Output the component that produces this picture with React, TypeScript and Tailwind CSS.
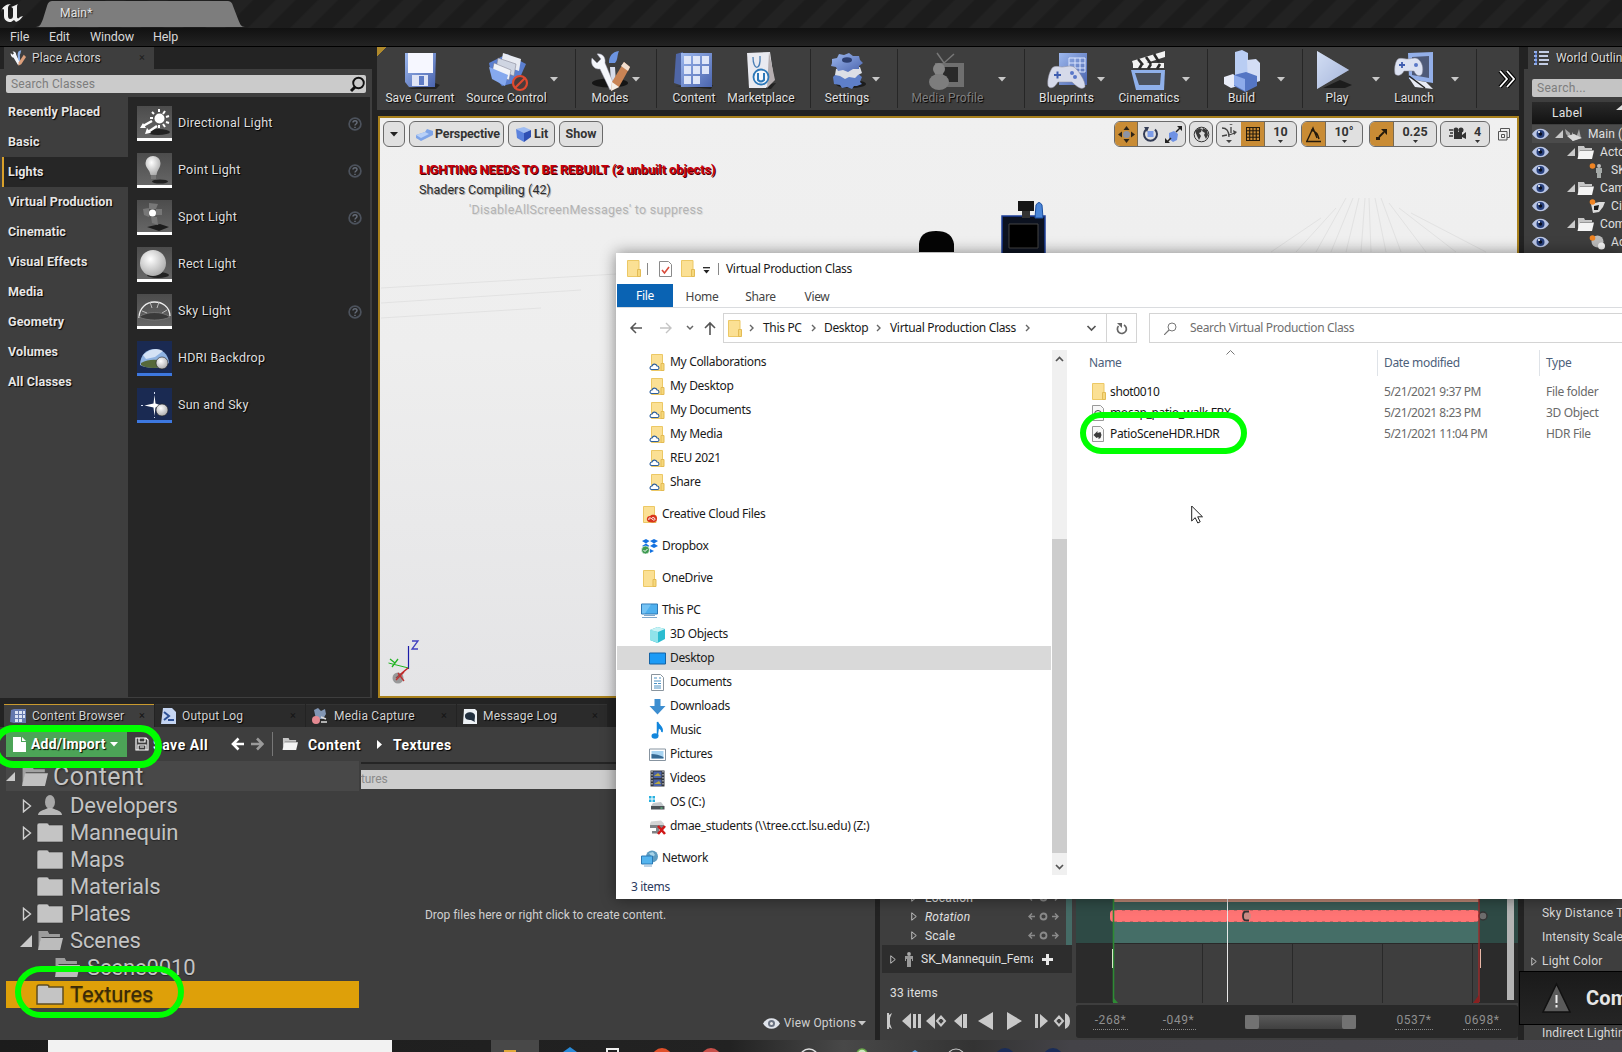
import React from "react";

type Kids = { children?: React.ReactNode };

const Caret = ({ c = "#c8c8c8", cls = "" }: { c?: string; cls?: string }) => (
  <svg width="8" height="5" viewBox="0 0 8 5" className={"shrink-0 " + cls}>
    <path d="M0 0h8L4 4.6z" fill={c} />
  </svg>
);

/* ---------- toolbar drawings ---------- */
const Tool = ({ children }: Kids) => (
  <svg width="44" height="40" viewBox="0 0 44 40" className="shrink-0 overflow-visible">
    <defs>
      <linearGradient id="blu" x1="0" y1="0" x2="1" y2="1">
        <stop offset="0" stopColor="#9db8ee" />
        <stop offset="1" stopColor="#4a64ae" />
      </linearGradient>
      <linearGradient id="wht" x1="0" y1="0" x2="1" y2="1">
        <stop offset="0" stopColor="#ffffff" />
        <stop offset="1" stopColor="#aab4d0" />
      </linearGradient>
    </defs>
    {children}
  </svg>
);
const SaveIcon = () => (
  <Tool>
    <path d="M10 38h28l4-4-5-2z" fill="#222" />
    <path d="M7 2h31l-1 34H11l-4-5z" fill="url(#blu)" />
    <path d="M10 2h25v20H10z" fill="#f6f7ff" />
    <path d="M14 24h16v11H14z" fill="#dfe4f5" />
    <path d="M21 25h5v9h-5z" fill="#5f7cc5" />
  </Tool>
);
const SourceIcon = () => (
  <Tool>
    <path d="M4 12l18-9 19 10-8 18-16 4L6 22z" fill="#5b7fd0" />
    <path d="M18 2l18 6-2 12-18-6z" fill="#e8ebf2" />
    <path d="M13 7l18 6-2 12-18-7z" fill="#cfd5e2" stroke="#778" strokeWidth=".5" />
    <path d="M9 12l17 7-2 10-17-7z" fill="#f1f3f8" stroke="#778" strokeWidth=".5" />
    <path d="M4 16l19 8-3 11L7 28z" fill="#86a9ee" />
    <circle cx="35" cy="32" r="7" fill="#4a3c3c" stroke="#e0492f" strokeWidth="2.2" />
    <path d="M30 37L40 27" stroke="#e0492f" strokeWidth="2.2" />
  </Tool>
);
const ModesIcon = () => (
  <Tool>
    <ellipse cx="22" cy="32" rx="18" ry="4.500" fill="#151515" />
    <path d="M22 16h5l1 16h-5z" fill="#d7dcea" />
    <path d="M21 12c0-7 3-11 10-12-2 4-1 9-4 12z" fill="#6c94e0" />
    <path d="M4 7l5 5 4-4-4-5c5-1 9 3 8 9l10 24-5 3L12 18C6 19 2 13 4 7z" fill="#f4f6fb" stroke="#99a" strokeWidth=".5" />
    <path d="M36 11l6 5-11 20-8 4 1-9z" fill="#c98455" />
    <path d="M36 11l6 5-2 4-7-5z" fill="#f2dfd0" />
    <path d="M24 31l7 5-8 4z" fill="#f5efe8" />
  </Tool>
);
const ContentIcon = () => (
  <Tool>
    <path d="M3 35l36 3 2-4z" fill="#222" />
    <path d="M4 3l7-2v34L2 32z" fill="#4f66a6" />
    <path d="M9 2h31v34H9z" fill="url(#blu)" />
    {[5, 15, 25].map((y) => [12, 21, 30].map((x) => (y === 25 && x === 30 ? null : <rect key={x + "" + y} x={x} y={y} width="7" height="8" fill="#dfe6f8" />)))}
  </Tool>
);
const MarketIcon = () => (
  <Tool>
    <path d="M10 36l22 2 5-6z" fill="#222" />
    <path d="M8 2l23-1 4 28-8 8H10z" fill="#e9eaf0" />
    <path d="M30 1l6 28-8 8z" fill="#b5aeb0" />
    <path d="M14 6c0 14 8 14 7-1" fill="none" stroke="#4b7fb5" strokeWidth="1.3" />
    <circle cx="22" cy="26" r="7.5" fill="#f4f7fc" stroke="#2d78b8" strokeWidth="1.8" />
    <path d="M19 22v7q3 3 6 0v-7" fill="none" stroke="#2d78b8" strokeWidth="2" />
  </Tool>
);
const SettingsIcon = () => (
  <Tool>
    <ellipse cx="26" cy="33" rx="15" ry="4" fill="#1c1c1c" />
    <path d="M8 26l4-4h20l5 4-2 5 2 2-5 2-3 0-2 3-5-2-5 1-2-3-6-1z" fill="#5e7fc8" />
    <path d="M11 18l24-2 2 6-4 2-3 3-6-1-4 2-5-3-5-1z" fill="#dcdfe6" />
    <path d="M7 8l5-1 2-4 5 1 5-2 4 3 6 0 1 4 3 3-4 3v3l-6 0-5 3-5-2-5 1-2-4-5-1 1-3z" fill="url(#blu)" />
    <ellipse cx="22" cy="9" rx="5" ry="2.8" fill="#2d3f70" />
  </Tool>
);
const MediaIcon = () => (
  <Tool>
    <path d="M11 2l7 10 10-9" fill="none" stroke="#777" strokeWidth="1.500" />
    <path d="M9 12h29v24H9z" fill="#6f6f6f" />
    <path d="M17 16h15v15H17z" fill="#292929" />
    <circle cx="13" cy="18" r="6" fill="#858585" />
    <ellipse cx="13" cy="31" rx="10" ry="8" fill="#7d7d7d" />
  </Tool>
);
const BlueprintIcon = () => (
  <Tool>
    <path d="M14 2h28v32H14z" fill="url(#blu)" />
    <path d="M24 7h16v14H24zM30 7v14M35 7v14M24 12h16M24 17h16" fill="none" stroke="#dce6ff" strokeWidth="1" />
    <path d="M7 17c4-3 7-1 10-1s8-2 12 0c4 3 12 14 11 20-3 3-7 1-13-5H13c-3 5-7 8-10 4-1-6 1-13 4-18z" fill="#d6daea" stroke="#889" strokeWidth=".5" />
    <path d="M9 24h7M12.500 20.500v7" stroke="#3f5db0" strokeWidth="2" />
    <circle cx="27" cy="22" r="2" fill="#5a78c8" />
    <circle cx="30" cy="26" r="2" fill="#5a78c8" />
  </Tool>
);
const CineIcon = () => (
  <Tool>
    <path d="M5 10L38 0v6L7 16zM6 12h31v5H6z" fill="#f2f2f2" />
    <path d="M11 8l5 6M19 6l5 7M27 3l5 8M12 18l3-5M21 18l3-5M30 18l3-5" stroke="#2a2a2a" strokeWidth="2.600" />
    <path d="M4 19h34l-1 20H9z" fill="#8fb0ea" />
    <path d="M8 22h26l-1 12H12z" fill="#4b515c" />
  </Tool>
);
const BuildIcon = () => (
  <Tool>
    <path d="M15 1l7-2 6 3v24l-8 6-5-4z" fill="#b9cdf3" />
    <path d="M27 9l9-1 4 4v18l-12 4z" fill="#d3ddf5" />
    <path d="M4 26l9-3 5 4v8l-7 2-7-4z" fill="#e8ecf8" />
    <path d="M14 24l12-3 11 4v10l-12 6-11-6z" fill="#5576c4" />
    <path d="M14 24l11 4v12l-11-6z" fill="#8eabea" />
  </Tool>
);
const PlayIcon = () => (
  <Tool>
    <path d="M8 37l22 0 7-3-12-5z" fill="#1c1c1c" />
    <path d="M2 0l32 19L2 38z" fill="url(#wht)" />
    <path d="M2 0l32 19L2 38z" fill="#9db5e6" opacity=".45" />
  </Tool>
);
const LaunchIcon = () => (
  <Tool>
    <path d="M16 2l25-1v31l-24-4z" fill="#93afe8" />
    <path d="M20 6l17-1v22l-17-3z" fill="#4e5a78" />
    <path d="M5 9c3-3 6-1 10-1s8-2 11 0c4 3 6 9 4 15-2 3-6 2-8-3H12c-2 4-6 6-9 3-1-5 0-11 2-14z" fill="#dce2f2" stroke="#889" strokeWidth=".5" />
    <path d="M7 14h6M10 11v6" stroke="#3f5db0" strokeWidth="1.800" />
    <circle cx="24" cy="14" r="2" fill="#5a78c8" />
    <path d="M17 27l6 9 18 2-7-7-6-1z" fill="#e8ebf4" />
    <path d="M17 25l16 12" stroke="#222" strokeWidth="1.500" />
  </Tool>
);

const TOOLS: { l: string; i: React.FC; m: string; w: string; a?: string; s?: string; dim?: boolean }[] = [
  { l: "Save Current", i: SaveIcon, m: "ml-0", w: "w-[86px]" },
  { l: "Source Control", i: SourceIcon, m: "ml-0", w: "w-[87px]", a: "ml-0", s: "ml-[17px]" },
  { l: "Modes", i: ModesIcon, m: "ml-[12px]", w: "w-[44px]", a: "ml-0", s: "ml-[16px]" },
  { l: "Content", i: ContentIcon, m: "ml-[12px]", w: "w-[50px]" },
  { l: "Marketplace", i: MarketIcon, m: "ml-[8px]", w: "w-[68px]", s: "ml-[15px]" },
  { l: "Settings", i: SettingsIcon, m: "ml-[12px]", w: "w-[48px]", a: "ml-px", s: "ml-[17px]" },
  { l: "Media Profile", i: MediaIcon, m: "ml-[10px]", w: "w-[79px]", a: "ml-[11px]", s: "ml-[18px]", dim: true },
  { l: "Blueprints", i: BlueprintIcon, m: "ml-[12px]", w: "w-[59px]", a: "ml-px" },
  { l: "Cinematics", i: CineIcon, m: "ml-[13px]", w: "w-[62px]", a: "ml-[2px]", s: "ml-[17px]" },
  { l: "Build", i: BuildIcon, m: "ml-[12px]", w: "w-[43px]", a: "ml-[14px]", s: "ml-[17px]" },
  { l: "Play", i: PlayIcon, m: "ml-[12px]", w: "w-[44px]", a: "ml-[13px]" },
  { l: "Launch", i: LaunchIcon, m: "ml-[12px]", w: "w-[44px]", a: "ml-[15px]", s: "ml-[17px]" },
];

const Toolbar = () => (
  <div className="flex h-[63px] w-[1142px] shrink-0 items-stretch overflow-hidden bg-[#3e3e3e] bg-[linear-gradient(135deg,#b08a2c_7px,transparent_7px)]">
    {TOOLS.map((t) => (
      <React.Fragment key={t.l}>
        <div className={"flex shrink-0 flex-col items-center pt-[4px] " + t.m + " " + t.w}>
          <t.i />
          <span className={"whitespace-nowrap text-[12px] leading-[14px] tracking-[.1px] [text-shadow:1px_1px_1px_#000] " + (t.dim ? "text-[#808080]" : "text-[#e2e2e2]")}>{t.l}</span>
        </div>
        {t.a && <Caret cls={"mt-[30px] " + t.a} />}
        {t.s && <div className={"my-[2px] w-px shrink-0 bg-[#262626] " + t.s} />}
      </React.Fragment>
    ))}
    <svg width="18" height="18" viewBox="0 0 18 18" className="ml-[21px] mt-[23px] shrink-0">
      <path d="M2 1l7 8-7 8M9 1l7 8-7 8" fill="none" stroke="#000" strokeWidth="4" />
      <path d="M2 1l7 8-7 8M9 1l7 8-7 8" fill="none" stroke="#fff" strokeWidth="1.800" />
    </svg>
  </div>
);

/* ---------- place actors ---------- */
const Thumb = ({ children, blue }: Kids & { blue?: boolean }) => (
  <svg width="35" height="35" viewBox="0 0 35 35" className="shrink-0">
    <defs>
      <radialGradient id="sph" cx=".4" cy=".35" r=".7">
        <stop offset="0" stopColor="#fff" />
        <stop offset="1" stopColor="#a9a9a9" />
      </radialGradient>
      <linearGradient id="tb" x1="0" y1="0" x2="0" y2="1">
        <stop offset="0" stopColor="#4c4c4c" />
        <stop offset="1" stopColor="#666" />
      </linearGradient>
    </defs>
    <rect width="35" height="32" fill={blue ? "#1a2a52" : "url(#tb)"} />
    {children}
    <rect y="32" width="35" height="3" fill={blue ? "#3d78e0" : "#fff"} />
  </svg>
);
const THUMBS = [
  <Thumb key="a">
    <ellipse cx="21" cy="26" rx="12" ry="3" fill="#222" />
    <circle cx="22.500" cy="12.500" r="5" fill="#fff" />
    <path d="M22 3v3M28 5l-2 3M32 10l-3 1M32 17l-3-1M28 21l-2-3M15 6l2 2M13 12h3M22 22v-3" stroke="#fff" strokeWidth="2" />
    <path d="M15 15L6 20M20 20l-9 6" stroke="#fff" strokeWidth="2.400" />
    <path d="M3 22l3-5 3 5zM8 28l2-6 4 5z" fill="#fff" />
  </Thumb>,
  <Thumb key="b">
    <ellipse cx="23" cy="28.500" rx="8" ry="2" fill="#222" />
    <path d="M8.500 10a7.500 7 0 0 1 15 0c0 5-3 6-4 12h-6c-1-6-5-7-5-12z" fill="url(#sph)" />
    <path d="M14 22h5v4h-5z" fill="#777" />
  </Thumb>,
  <Thumb key="c">
    <path d="M10 27l13-3 9 3-10 4z" fill="#1d1d1d" />
    <path d="M12 3l9 1-2 5h-7zM6 9l6-1v9l-5-2zM19 9h6v6h-6zM14 17l6 0 1 8-6-2z" fill="#777" />
    <circle cx="15.500" cy="13" r="3.500" fill="#fff" />
  </Thumb>,
  <Thumb key="d">
    <ellipse cx="21" cy="28" rx="11" ry="3" fill="#222" />
    <circle cx="16" cy="16" r="13" fill="url(#sph)" />
  </Thumb>,
  <Thumb key="e">
    <path d="M2 24C2 3 32 3 33 22" fill="none" stroke="#eee" strokeWidth="1.300" />
    <path d="M2 23c8-6 23-6 31 0-8 4-23 4-31 0z" fill="#3a3a3a" stroke="#888" strokeWidth=".6" />
    <path d="M13 8l2 6M22 8l-2 6M5 17l5 2M30 16l-5 3" stroke="#bbb" />
  </Thumb>,
  <Thumb key="f" blue>
    <path d="M3 24C3 3 31 3 32 22c-8 6-22 6-29 2z" fill="#8fb3e2" />
    <path d="M6 14c6-6 14-8 20-4l-8 6-9 2z" fill="#e5eefa" opacity=".8" />
    <path d="M4 22c7-4 15-4 22-2l-2 6c-7 2-16 1-20-2z" fill="#56693a" />
    <circle cx="25" cy="22" r="6" fill="url(#sph)" stroke="#222" strokeWidth=".6" />
  </Thumb>,
  <Thumb key="g" blue>
    <path d="M17.500 7l1 8.500 6 2-6 2-1 8.500-1-8.500-9-2 9-2z" fill="#fff" />
    <path d="M17.500 4v2M4 17.500h2M17.500 29v1" stroke="#cfd9ee" />
    <circle cx="25" cy="22" r="6" fill="url(#sph)" stroke="#222" strokeWidth=".6" />
  </Thumb>,
];
const ACTORS = ["Directional Light", "Point Light", "Spot Light", "Rect Light", "Sky Light", "HDRI Backdrop", "Sun and Sky"];
const CATS = ["Recently Placed", "Basic", "Lights", "Virtual Production", "Cinematic", "Visual Effects", "Media", "Geometry", "Volumes", "All Classes"];

const PlaceActors = () => (
  <div className="flex w-[372px] shrink-0 flex-col">
    <div className="flex h-[22px] bg-[#232323] pl-[4px]">
      <div className="flex w-[150px] items-center bg-[#3e3e3e] pl-[6px] text-[12px] tracking-[.1px] text-[#d5d5d5] [text-shadow:1px_1px_1px_#000]">
        <svg width="16" height="16" viewBox="0 0 44 42">
          <path d="M21 12c0-7 3-11 10-12-2 4-1 9-4 12l1 20h-5z" fill="#8fb2ea" />
          <path d="M2 7l5 5 4-4-4-5c7-1 10 3 10 9l11 24-6 4L10 20C4 19 1 13 2 7z" fill="#f4f6fb" />
          <path d="M38 12l6 6-13 20-8 4 1-9z" fill="#dda07c" />
        </svg>
        <span className="ml-[6px]">Place Actors</span>
        <span className="ml-auto mr-[9px] text-[11px] text-[#1e1e1e] [text-shadow:none]">×</span>
      </div>
    </div>
    <div className="flex h-[629px] flex-col bg-[#3e3e3e]">
      <div className="mx-[6px] mt-[6px] flex h-[18px] items-center justify-between rounded-[2px] bg-[#cbcbcb] pl-[5px] text-[12px] tracking-[.15px] text-[#7d7d7d]">
        Search Classes
        <svg width="17" height="17" viewBox="0 0 17 17">
          <circle cx="9.500" cy="7" r="5.300" fill="none" stroke="#111" strokeWidth="1.900" />
          <path d="M6 11l-4 4" stroke="#111" strokeWidth="3" />
        </svg>
      </div>
      <div className="mt-[4px] flex h-[600px]">
        <div className="w-[128px] pb-1">
          {CATS.map((c) => (
            <div key={c} className={"flex h-[30px] items-center whitespace-nowrap text-[12.500px] font-bold tracking-[.13px] text-[#e6e6e6] [text-shadow:1px_1px_1px_#000] " + (c === "Lights" ? "ml-[2px] border-l-2 border-[#d9a02a] bg-[#262626] pl-[4px]" : "pl-[8px]")}>
              {c}
            </div>
          ))}
        </div>
        <div className="w-[242px] bg-[#262626] pl-[9px] pt-[9px]">
          {ACTORS.map((a, i) => (
            <div key={a} className="mb-[12px] flex h-[35px] items-center text-[12.500px] tracking-[.25px] text-[#dedede] [text-shadow:1px_1px_1px_#000]">
              {THUMBS[i]}
              <span className="ml-[6px]">{a}</span>
              {[0, 1, 2, 4].includes(i) && (
                <svg width="14" height="14" viewBox="0 0 14 14" className="ml-auto mr-[8px]">
                  <circle cx="7" cy="7" r="5.900" fill="none" stroke="#4c525c" strokeWidth="1.700" />
                  <path d="M5 5.600C5 3 9.200 3 9 5.600 9 7 7 7 7 8.600M7 9.700v1.400" fill="none" stroke="#656c78" strokeWidth="1.500" />
                </svg>
              )}
            </div>
          ))}
        </div>
      </div>
    </div>
  </div>
);

/* ---------- viewport ---------- */
const VBtn = ({ children, cls = "" }: Kids & { cls?: string }) => (
  <div className={"flex h-[26px] shrink-0 items-center overflow-hidden rounded-[6px] border border-[#6a6a6a] bg-[#e0e0e0] text-[12.500px] font-bold text-[#333] " + cls}>{children}</div>
);
const Orange = ({ children, cls = "w-[24px]" }: Kids & { cls?: string }) => <div className={"flex h-full shrink-0 items-center justify-center border-r border-[#7a6a50] bg-[#c98c35] " + cls}>{children}</div>;
const Num = ({ v }: { v: string }) => (
  <div className="flex flex-1 flex-col items-center leading-[12px]">
    {v}
    <svg width="5" height="3" viewBox="0 0 5 3" className="mt-[2px]">
      <path d="M0 0h5L2.500 3z" fill="#333" />
    </svg>
  </div>
);

const Viewport = () => (
  <div className="relative ml-px mt-[6px] h-[582px] w-[1141px] overflow-hidden border-2 border-[#a9811c] bg-[linear-gradient(180deg,#f0f0f0,#eeeeee_40%,#e4e4e6)]">
    <svg className="absolute left-0 top-0" width="1137" height="578" viewBox="-1 0 1137 578">
      <g stroke="#e2e2e2" strokeWidth="1">
        <path d="M940 100L890 134M955 90L915 134M965 80L935 134M972 80L950 134M978 80L965 134M984 80L980 134M988 80L990 134M994 80L1005 134M1000 80L1020 134M1008 85L1045 134M1018 90L1075 134M1030 95L1105 134M0 170L236 156M0 200L160 190M0 185L200 172" />
      </g>
      <path d="M538 134v-8q1-13 17-13t18 13v8z" fill="#050505" />
      <path d="M621 98h43v40h-43z" fill="#0c1220" stroke="#1d3f9a" strokeWidth="1.500" />
      <path d="M628 106h29v24h-29z" fill="#000" stroke="#444" />
      <path d="M637 83h16v10h-16z" fill="#161616" />
      <path d="M641 93h8v7h-8z" fill="#333" />
      <path d="M655 87q3-5 6 0l1 13h-8z" fill="#4a86d8" stroke="#1c4fa0" />
      <path d="M27.500 528v23" stroke="#1b1ba8" strokeWidth="1.200" />
      <path d="M27.500 550l-20-5" stroke="#22b422" />
      <path d="M27 550l-12 10" stroke="#c02020" strokeWidth="1.500" />
      <circle cx="17" cy="560" r="5.500" fill="#666" opacity=".6" />
      <path d="M17 555l6 8M23 554l-8 8" stroke="#c03030" strokeWidth="1.300" />
      <path d="M9 541l5 4M17 541l-6 8" stroke="#22b422" strokeWidth="1.300" />
      <path d="M31 523h6l-6 8h6" fill="none" stroke="#4040c0" strokeWidth="1.300" />
    </svg>
    <div className="relative flex pl-[3px] pt-[3px]">
      <VBtn cls="w-[22px] justify-center">
        <Caret c="#222" />
      </VBtn>
      <VBtn cls="ml-[4px] w-[95px] pl-[6px]">
        <svg width="17" height="13" viewBox="0 0 17 13">
          <path d="M0 7l9-3 2-3 6 2v4l-6 3-6 3-5-3z" fill="#7fa5e8" />
          <path d="M0 7l9-3 4 2-8 4z" fill="#b8d0f7" />
        </svg>
        <span className="ml-[2px] tracking-[-.15px]">Perspective</span>
      </VBtn>
      <VBtn cls="ml-[4px] w-[47px] pl-[6px]">
        <svg width="17" height="17" viewBox="0 0 17 17">
          <path d="M1 3l8-2 7 3-7 3z" fill="#9ebcf2" />
          <path d="M1 3l8 4v9l-7-4z" fill="#5b82dd" />
          <path d="M16 4l-7 3v9l7-5z" fill="#2f50b4" />
        </svg>
        <span className="ml-[2px]">Lit</span>
      </VBtn>
      <VBtn cls="ml-[4px] w-[44px] justify-center">Show</VBtn>
      <VBtn cls="ml-[511px] w-[72px]">
        <Orange cls="w-[23px]">
          <svg width="17" height="17" viewBox="0 0 17 17">
            <circle cx="8.500" cy="8.500" r="3.500" fill="#8d93a4" />
            <path d="M8.500 0l3 4h-6zM8.500 17l3-4h-6zM0 8.500l4-3v6zM17 8.500l-4-3v6z" fill="#2d2418" />
          </svg>
        </Orange>
        <svg width="17" height="17" viewBox="0 0 17 17" className="ml-[4px]">
          <path d="M5.500 5h6v6h-6z" fill="#7c9ce8" />
          <path d="M4 3.500a6.500 6.500 0 1 0 9 0" fill="none" stroke="#333c55" strokeWidth="2" />
          <path d="M2 1l5 0-2 5z" fill="#333c55" />
        </svg>
        <svg width="17" height="17" viewBox="0 0 17 17" className="ml-[6px]">
          <path d="M4 7l5-2 4 3-1 6-4 2-4-3z" fill="#6f92e4" />
          <path d="M11 6l4-4M6 12l-4 4" stroke="#222" strokeWidth="1.500" />
          <path d="M17 0v5l-5-5zM0 17v-5l5 5z" fill="#222" />
        </svg>
      </VBtn>
      <VBtn cls="ml-[3px] w-[24px] justify-center">
        <svg width="17" height="17" viewBox="0 0 17 17">
          <circle cx="8.500" cy="8.500" r="7.300" fill="#ddd" stroke="#333" strokeWidth="1" />
          <path d="M2 5l4-3 3 1-1 3-2 1 2 3-2 4-2-4zM10 2l4 2 1 5-2 4-2-4 1-2-3-2z" fill="#3a3a3a" />
        </svg>
      </VBtn>
      <VBtn cls="ml-[3px] w-[81px]">
        <svg width="22" height="20" viewBox="0 0 22 20" className="mx-px">
          <path d="M4 4c4 0 7 3 7 9M11 11l6-2M4 12l5-1M13 3v6" fill="none" stroke="#444" strokeWidth="1.300" />
          <path d="M11 1h4l-2-1zM15 6l4 2-3 3zM8 16h6l-3 3z" fill="#444" />
        </svg>
        <Orange>
          <svg width="14" height="14" viewBox="0 0 15 15">
            <path d="M.5.500h14v14H.5zM4 0v15M7.500 0v15M11 0v15M0 4h15M0 7.500h15M0 11h15" fill="none" stroke="#241a0c" strokeWidth="1.200" />
          </svg>
        </Orange>
        <Num v="10" />
      </VBtn>
      <VBtn cls="ml-[4px] w-[62px]">
        <Orange>
          <svg width="17" height="17" viewBox="0 0 17 17">
            <path d="M1 15.500h15M2 15L8 2l4 10M6 4c4 1 7 4 8 9" fill="none" stroke="#241a0c" strokeWidth="1.400" />
          </svg>
        </Orange>
        <Num v="10°" />
      </VBtn>
      <VBtn cls="ml-[6px] w-[68px]">
        <Orange>
          <svg width="13" height="13" viewBox="0 0 13 13">
            <path d="M4 9l5-5" stroke="#241a0c" strokeWidth="1.800" />
            <path d="M12 1v6L6 1zM1 9h4v3H1z" fill="#241a0c" />
          </svg>
        </Orange>
        <Num v="0.25" />
      </VBtn>
      <VBtn cls="ml-[3px] w-[50px] pl-[8px]">
        <svg width="17" height="14" viewBox="0 0 17 14">
          <path d="M0 3h4M1 6h3M0 9h4" stroke="#333" strokeWidth="1.300" />
          <path d="M5 5h8v7H5zM13 8l4-3v7l-4-2z" fill="#333" />
          <circle cx="7" cy="3" r="2.500" fill="#333" />
          <circle cx="12" cy="3" r="2.500" fill="#333" />
        </svg>
        <Num v="4" />
      </VBtn>
      <svg width="12" height="13" viewBox="0 0 12 13" className="ml-[8px] mt-[7px]">
        <path d="M2.500 3V.5h9v9H9M.5 3.500h8.500v8.500H.5zM3.500 6.500h3v3h-3z" fill="none" stroke="#555" />
      </svg>
    </div>
    <div className="relative pl-[39px] pt-[13px] leading-[20px]">
      <div className="text-[13px] font-bold tracking-[-.14px] text-[#c8000c] [text-shadow:1px_1px_0_#4a0000]">LIGHTING NEEDS TO BE REBUILT (2 unbuilt objects)</div>
      <div className="text-[12.500px] tracking-[.06px] text-[#2c2c2c] [text-shadow:1px_1px_0_#aaa]">Shaders Compiling (42)</div>
      <div className="pl-[50px] text-[12.500px] tracking-[.27px] text-[#b3b3b3] [text-shadow:1px_1px_0_#ddd]">'DisableAllScreenMessages' to suppress</div>
    </div>
  </div>
);

/* ---------- outliner ---------- */
const Eye = () => (
  <svg width="17" height="12" viewBox="0 0 17 12" className="shrink-0">
    <path d="M0 6C4-1 13-1 17 6c-4 7-13 7-17 0z" fill="#b8c4e4" />
    <circle cx="8.500" cy="6" r="4" fill="#28407c" />
    <circle cx="8.500" cy="6" r="1.700" fill="#0a1020" />
    <circle cx="7" cy="4" r="1" fill="#fff" />
  </svg>
);
const Tri = ({ s = 8, c = "#c9c9c9" }) => (
  <svg width={s} height={s} viewBox="0 0 8 8" className="shrink-0">
    <path d="M8 0v8H0z" fill={c} />
  </svg>
);
const OpenFolder = ({ w = 17, c = "#f4f4f4" }) => (
  <svg width={w} height={(w * 13) / 17} viewBox="0 0 17 13" className="shrink-0">
    <path d="M1 0h6l1 2h7v2H3L1 12z" fill={c} opacity=".75" />
    <path d="M2.500 4.500H17L15 13H.5z" fill={c} />
  </svg>
);
const OUT: [string, string, string][] = [
  ["Main (", "m", "pl-[6px]"],
  ["Acto", "f", "pl-[18px]"],
  ["SK", "a", "pl-[40px]"],
  ["Cam", "f", "pl-[18px]"],
  ["Ci", "c", "pl-[40px]"],
  ["Com", "f", "pl-[18px]"],
  ["Ac", "s", "pl-[40px]"],
];
const Outliner = () => (
  <div className="ml-[5px] flex w-[98px] shrink-0 flex-col overflow-hidden bg-[#3e3e3e]">
    <div className="flex h-[22px] items-center border-l-4 border-[#232323] pl-[6px] text-[12px] tracking-[.1px] text-[#dcdcdc] [text-shadow:1px_1px_1px_#000]">
      <svg width="16" height="16" viewBox="0 0 16 16" className="shrink-0">
        <path d="M2 1v14" stroke="#4d6cb8" strokeWidth="2" />
        <path d="M5 2h10M5 6h9M5 10h10M5 14h9" stroke="#c3cde4" strokeWidth="2" />
        <path d="M0 2h3M0 6h3M0 10h3M0 14h3" stroke="#93aee8" strokeWidth="2" />
      </svg>
      <span className="ml-[6px] whitespace-nowrap">World Outlin</span>
    </div>
    <div className="ml-[8px] mt-[10px] h-[18px] rounded-l-[2px] bg-[#c4c4c4] pl-[5px] text-[12px] leading-[18px] tracking-[.3px] text-[#7d7d7d]">Search...</div>
    <div className="ml-[8px] mt-[5px] flex h-[22px] items-center bg-[linear-gradient(#2a2a2a,#121212)] pl-[20px] text-[12px] tracking-[.3px] text-[#e4e4e4]">
      Label
      <svg width="6" height="5" viewBox="0 0 6 5" className="mb-[12px] ml-auto">
        <path d="M0 5h6V0z" fill="#ddd" />
      </svg>
    </div>
    <div className="h-px shrink-0" />
    {OUT.map(([t, k, p], i) => (
      <div key={t} className={"ml-[8px] flex h-[18px] shrink-0 items-center whitespace-nowrap text-[12px] tracking-[.1px] text-[#e0e0e0] " + (i === 0 ? "bg-[#4b4b4b]" : "")}>
        <Eye />
        <div className={"flex items-center " + p}>
          {(k === "m" || k === "f") && <Tri />}
          {k === "m" && (
            <svg width="20" height="15" viewBox="0 0 20 15">
              <path d="M2 2l5 4 1 6-5-5zM9 5l4 6 3-9 2 9-9 3z" fill="#a5a5a5" />
              <path d="M4 9l6 5 9-3-8-4z" fill="#d8d8d8" />
            </svg>
          )}
          {k === "f" && <span className="ml-[2px]"><OpenFolder /></span>}
          {k === "a" && (
            <svg width="16" height="16" viewBox="0 0 16 16">
              <circle cx="10" cy="4" r="2" fill="#bbb" />
              <path d="M7 6h6v5h-1v5H8v-5H7z" fill="#a5aaa8" />
              <circle cx="3.500" cy="4" r="2.800" fill="#f08423" />
            </svg>
          )}
          {k === "c" && (
            <svg width="16" height="16" viewBox="0 0 16 16">
              <path d="M2 6l8-2 6 0-2 5-4 5-6 1z" fill="#dcdcdc" />
              <path d="M5 8l5-1-1 5-4 0z" fill="#1a1a1a" />
              <circle cx="3.500" cy="4" r="2.800" fill="#f08423" />
            </svg>
          )}
          {k === "s" && (
            <svg width="16" height="16" viewBox="0 0 16 16">
              <circle cx="8.500" cy="7.500" r="6" fill="#bbb" />
              <circle cx="12.500" cy="12" r="3.500" fill="#f4f4f4" />
              <circle cx="3.500" cy="4" r="2.800" fill="#f08423" />
            </svg>
          )}
          <span className={k === "m" ? "ml-[5px]" : "ml-[6px]"}>{t}</span>
        </div>
      </div>
    ))}
  </div>
);

/* ---------- content browser ---------- */
const TABS: [string, React.ReactNode][] = [
  ["Content Browser", <svg key="1" width="16" height="14" viewBox="0 0 16 14"><path d="M1 1l3-1v14l-4-1zM4 0h12v14H4z" fill="#6478ae" /><path d="M5 2h3v3H5zM9 2h3v3H9zM13 2h2v3h-2zM5 6h3v3H5zM9 6h3v3H9zM13 6h2v3h-2zM5 10h3v3H5zM9 10h3v3H9z" fill="#dbe2f4" /></svg>],
  ["Output Log", <svg key="2" width="15" height="16" viewBox="0 0 15 16"><path d="M2 0h9l4 4v12H0z" fill="#c5d5f2" /><path d="M3 4l5 4-5 4M7 12h6" fill="none" stroke="#2c4f94" strokeWidth="2" /></svg>],
  ["Media Capture", <svg key="3" width="16" height="16" viewBox="0 0 16 16"><path d="M2 2l4-2 3 3 4-2 1 5-3 5H4z" fill="#8296b4" /><circle cx="4" cy="12" r="4" fill="#e58a92" /><path d="M9 9l5 2M9 14h6" stroke="#ddd" strokeWidth="1.500" /></svg>],
  ["Message Log", <svg key="4" width="14" height="15" viewBox="0 0 14 15"><path d="M1 0h11l2 2v13H0z" fill="#eef2f6" /><path d="M2 7c0-5 10-5 10 0 0 3-1 4 0 6l-4-2C4 11 2 10 2 7z" fill="#22303f" /></svg>],
];
const TREE: [string, string, string, string][] = [
  ["Developers", "closed", "user", ""],
  ["Mannequin", "closed", "folder", ""],
  ["Maps", "", "folder", ""],
  ["Materials", "", "folder", ""],
  ["Plates", "closed", "folder", ""],
  ["Scenes", "open", "open", ""],
  ["Scene0010", "", "open", "pl-[17px]"],
  ["Textures", "", "folder", "sel"],
];
const Hollow = ({ w = 8, h = 12 }) => (
  <svg width={w} height={h} viewBox="0 0 8 12" className="shrink-0">
    <path d="M1 1l6 5-6 5z" fill="none" stroke="#cfcfcf" strokeWidth="1.200" />
  </svg>
);

const ContentBrowser = () => (
  <div className="flex w-[875px] shrink-0 flex-col">
    <div className="flex h-[23px] gap-px bg-[#232323] pl-[4px]">
      {TABS.map(([t, ic], i) => (
        <div key={t} className={"flex w-[150px] items-center pl-[6px] text-[12px] tracking-[.22px] text-[#d2d2d2] [text-shadow:1px_1px_1px_#000] " + (i === 0 ? "border-t border-[#c99a2e] bg-[#3e3e3e]" : "border-t border-[#333] bg-[#2b2b2b]")}>
          {ic}
          <span className="ml-[6px]">{t}</span>
          <span className="ml-auto mr-[9px] text-[11px] text-[#151515] [text-shadow:none]">×</span>
        </div>
      ))}
    </div>
    <div className="flex h-[34px] items-center bg-[#3e3e3e] pl-[6px] text-[14px] font-bold text-white [text-shadow:1px_1px_1px_#000]">
      <div className="flex h-[26px] w-[121px] items-center bg-[#4ca457] pl-[7px] pt-px">
        <svg width="13" height="15" viewBox="0 0 13 15">
          <path d="M0 0h8v5h5v10H0zM9 0l4 4H9z" fill="#fff" />
        </svg>
        <span className="ml-[5px] tracking-[.2px]">Add/Import</span>
        <Caret c="#fff" cls="ml-[4px]" />
      </div>
      <svg width="14" height="14" viewBox="0 0 14 14" className="ml-[8px]">
        <path d="M1 1h10l2 2v10H1zM4 1v4h6V1M3 13V8h8v5M5 10h4" fill="none" stroke="#fff" strokeWidth="1.200" />
      </svg>
      <span className="ml-[4px] w-[56px] whitespace-nowrap pt-[2px] tracking-[.55px]">Save All</span>
      <svg width="33" height="14" viewBox="0 0 33 14" className="ml-[22px]">
        <path d="M13 7H3M7.500 1.500L2 7l5.500 5.500" fill="none" stroke="#fff" strokeWidth="2.600" />
        <path d="M20 7h11M26 1.500L31.500 7 26 12.500" fill="none" stroke="#9a9a9a" strokeWidth="2.600" />
      </svg>
      <div className="ml-[8px] mr-[9px] h-[24px] w-px bg-[#777]" />
      <OpenFolder w={16} />
      <span className="ml-[10px] w-[53px] pt-[2px] tracking-[.45px]">Content</span>
      <svg width="5" height="9" viewBox="0 0 5 9" className="ml-[16px] mt-px">
        <path d="M0 0l5 4.500L0 9z" fill="#fff" />
      </svg>
      <span className="ml-[11px] pt-[2px] tracking-[.45px]">Textures</span>
    </div>
    <div className="flex h-[279px] bg-[#3e3e3e]">
      <div className="relative w-[361px]">
        <div className="ml-[6px] mr-[2px] text-[22px] tracking-[-.12px] text-[#c4c4c4]">
          <div className="flex h-[30px] items-center bg-[#484848]">
            <Tri s={9} />
            <span className="ml-[6px] mr-[5px]"><OpenFolder w={27} c="#c0c0c0" /></span>
            <span className="pt-px text-[25px] tracking-[.45px] [text-shadow:1px_1px_2px_#222]">Content</span>
          </div>
          <div className="h-px" />
          {TREE.map(([t, e, ic, x]) => (
            <div key={t} className={"flex h-[27px] items-center " + (x === "sel" ? "bg-[#dea009] text-[#3a2a08]" : x)}>
              <div className="flex w-[31px] justify-end pr-[5px]">
                {e === "closed" && <Hollow w={10} h={14} />}
                {e === "open" && <Tri s={12} />}
              </div>
              {ic === "user" && (
                <svg width="26" height="22" viewBox="0 0 26 22">
                  <ellipse cx="13" cy="7" rx="5" ry="7" fill="#a8a8a8" />
                  <path d="M1 20c0-4 6-5 10-7h4c4 2 10 3 10 7z" fill="#b8b8b8" />
                </svg>
              )}
              {ic === "folder" && (
                <svg width="26" height="18" viewBox="0 0 26 18" className="overflow-visible">
                  <path d="M0 1q0-2 2-2h8q2 0 2 2h14v17H0z" fill="#c4c4c4" stroke={x === "sel" ? "#5e4c20" : "#333"} strokeWidth={x === "sel" ? 1.5 : 0.6} />
                </svg>
              )}
              {ic === "open" && <OpenFolder w={26} c="#bcbcbc" />}
              <span className="ml-[7px] [text-shadow:0_1px_1px_#0006]">{t}</span>
            </div>
          ))}
        </div>
      </div>
      <div className="flex flex-1 flex-col">
        <div className="mt-px h-[2px] bg-[#252525]" />
        <div className="mt-[6px] h-[19px] bg-[#cdcdcd] text-[12px] leading-[19px] tracking-[-.1px] text-[#8a8a8a]">tures</div>
        <div className="mt-[117px] pl-[64px] text-[12px] tracking-[-.03px] text-[#d0d0d0]">Drop files here or right click to create content.</div>
        <div className="mb-[8px] ml-auto mr-[9px] mt-auto flex items-center text-[12px] tracking-[.15px] text-[#d0d0d0]">
          <svg width="17" height="11" viewBox="0 0 17 11" className="mr-[4px]">
            <path d="M0 5.500C4-1.500 13-1.500 17 5.500c-4 7-13 7-17 0z" fill="#dfe3ea" />
            <circle cx="8.500" cy="5.500" r="3.500" fill="#6b7382" />
            <circle cx="8.500" cy="5.500" r="1.500" fill="#e8e8e8" />
          </svg>
          View Options
          <Caret cls="ml-[2px]" />
        </div>
      </div>
    </div>
  </div>
);

/* ---------- sequencer ---------- */
const Keys = () => (
  <svg width="31" height="9" viewBox="0 0 31 9" className="ml-auto mr-[7px]">
    <path d="M7 4.500H1M4 1.500L1 4.500l3 3M24 4.500h6M27 1.500l3 3-3 3" fill="none" stroke="#8a8a8a" strokeWidth="1.500" />
    <circle cx="15.500" cy="4.500" r="3" fill="none" stroke="#8a8a8a" strokeWidth="1.800" />
  </svg>
);
const SeqRow = ({ t, it }: { t: string; it?: boolean }) => (
  <div className="flex h-[19px] items-center pl-[29px] text-[12px] tracking-[.2px] text-[#e0e0e0]">
    <Hollow w={6} h={9} />
    <span className={"ml-[8px] " + (it ? "italic" : "")}>{t}</span>
    <Keys />
  </div>
);
const SeqNum = ({ t, cls }: { t: string; cls: string }) => <span className={"border-b border-dotted border-[#888] pb-px text-center text-[12px] leading-[15px] tracking-[.6px] text-[#8f8f8f] " + cls}>{t}</span>;

const Sequencer = () => (
  <div className="ml-[5px] flex w-[638px] shrink-0 flex-col bg-[#3e3e3e]">
    <div className="h-[184px] shrink-0" />
    <div className="flex h-[152px]">
      <div className="flex w-[192px] shrink-0 flex-col pl-[2px]">
        <div className="h-[57px] border-r-[6px] border-[#456b66]">
          <SeqRow t="Location" />
          <SeqRow t="Rotation" it />
          <SeqRow t="Scale" />
        </div>
        <div className="flex h-[28px] items-center bg-[#2d2d2d] pl-[8px] text-[12px] tracking-[.05px] text-[#e0e0e0]">
          <Hollow w={6} h={9} />
          <svg width="10" height="15" viewBox="0 0 10 15" className="ml-[8px] shrink-0">
            <circle cx="5" cy="2" r="1.900" fill="#aaa" />
            <path d="M1 4h8v5H8v-2H7v8H3V7H2v2H1z" fill="#999" />
          </svg>
          <span className="ml-[7px] w-[112px] overflow-hidden whitespace-nowrap">SK_Mannequin_Fema</span>
          <svg width="11" height="11" viewBox="0 0 11 11" className="ml-[9px] shrink-0">
            <path d="M4 0h3v4h4v3H7v4H4V7H0V4h4z" fill="#e8e8e8" />
          </svg>
        </div>
        <div className="mt-[11px] pl-[8px] text-[12px] leading-[18px] tracking-[.2px] text-[#e0e0e0]">33 items</div>
        <svg width="188" height="18" viewBox="0 0 188 18" className="mt-[10px]">
          <g fill="#c9c9c9">
            <path d="M5 1v16h2l0-2 3 2-2-5V6l2-5-3 2 0-2zM20 9l9-8v16zM31 2h3v14h-3zM36 2h3v14h-3zM44 9l9-8v16zM72 9l8-7v14zM81 2h4v14h-4zM96 9l15-9v18zM125 0l15 9-15 9zM153 2h3v14h-3zM158 2l8 7-8 7zM183 1q5 2 5 8t-5 8z" />
            <path d="M55 9l4-4.500L63 9l-4 4.500zM173 9l4-4.500L181 9l-4 4.500z" fill="none" stroke="#c9c9c9" strokeWidth="2" />
          </g>
        </svg>
      </div>
      <div className="ml-[4px] w-[442px] shrink-0">
        <svg width="442" height="115" viewBox="0 0 442 115" className="block">
          <rect width="442" height="55" fill="#2e4a45" />
          <rect x="37" width="366" height="55" fill="#456e67" />
          <rect x="37" y="13" width="366" height="9" fill="#3c5d57" />
          <rect x="38" y="9" width="365" height="5" fill="#c48a78" />
          <rect y="55" width="442" height="60" fill="#3e3e3e" />
          <rect y="55" width="37" height="60" fill="#2b2b2b" />
          <rect x="403" y="55" width="39" height="60" fill="#2b2b2b" />
          <rect x="34" y="22" width="369" height="12" rx="4" fill="#ff7474" />
          <path d="M38 22.500h364M38 33.500h364" stroke="#c86464" strokeDasharray="3 5" />
          <circle cx="171" cy="28" r="4" fill="#c98a84" />
          <path d="M173 23.500h-3q-3 0-3 4.500t3 4.500h3" fill="none" stroke="#333" strokeWidth="1.800" />
          <circle cx="407" cy="28" r="4" fill="#6d6d6d" stroke="#333" strokeWidth="1.400" />
          <path d="M0 55.500h430M126.500 55v60M216.500 55v60M306.500 55v60M396.500 55v60" stroke="#292929" />
          <path d="M37.500 11v103" stroke="#2e8a34" strokeWidth="1.600" />
          <path d="M37 109l5 6h-5z" fill="#2e8a34" />
          <path d="M36.500 61v19" stroke="#d8e8c8" />
          <path d="M403 11v103" stroke="#a02a2a" strokeWidth="1.400" />
          <path d="M403 107v8h-6z" fill="#8a2020" />
          <path d="M404.500 61v19" stroke="#e8b8a8" />
          <path d="M151.500 11v103" stroke="#e8e8e8" />
          <rect x="431" width="7" height="112" fill="#b4b4b4" />
        </svg>
        <div className="mt-[2px] flex h-[33px] items-center rounded-[3px] bg-[#292929]">
          <SeqNum t="-268*" cls="ml-[17px] w-[35px]" />
          <SeqNum t="-049*" cls="ml-[33px] w-[35px]" />
          <div className="ml-[49px] flex h-[14px] w-[111px] justify-between bg-[linear-gradient(#5a5a5a,#404040)]">
            <div className="w-[14px] rounded-[2px] bg-[#727272]" />
            <div className="w-[14px] rounded-[2px] bg-[#727272]" />
          </div>
          <SeqNum t="0537*" cls="ml-[39px] w-[38px]" />
          <SeqNum t="0698*" cls="ml-[30px] w-[38px]" />
        </div>
      </div>
    </div>
  </div>
);

const Details = () => (
  <div className="relative ml-[6px] flex-1 bg-[#3e3e3e] pt-[197px] text-[12px] tracking-[.22px] text-[#d8d8d8]">
    {["Sky Distance Th", "Intensity Scale", "Light Color"].map((t, i) => (
      <div key={t} className="flex h-[24px] w-[98px] items-center overflow-hidden whitespace-nowrap pl-[7px]">
        <div className="w-[11px] shrink-0">{i === 2 && <Hollow w={6} h={9} />}</div>
        {t}
      </div>
    ))}
    <div className="mt-[48px] h-[24px] w-[98px] overflow-hidden whitespace-nowrap pl-[18px] leading-[24px]">Indirect Lighting</div>
    <div className="absolute left-[-5px] top-[267px] flex h-[54px] w-[110px] items-center border border-black bg-[linear-gradient(#1a1a1a,#252525)] pl-[21px]">
      <svg width="31" height="32" viewBox="0 0 31 32" className="shrink-0">
        <path d="M15.500 2L29 30H2z" fill="#5a5a5a" stroke="#111" strokeWidth="1.500" />
        <path d="M15.500 13v8M15.500 23v2.500" stroke="#eee" strokeWidth="2" />
      </svg>
      <span className="ml-[14px] whitespace-nowrap text-[20px] font-bold tracking-[.2px] text-[#e6e6e6]">Com</span>
    </div>
  </div>
);

/* ---------- explorer ---------- */
const WFolder = ({ cls = "" }: { cls?: string }) => (
  <svg width="14" height="17" viewBox="0 0 14 17" className={"shrink-0 " + cls}>
    <path d="M.5.500h11.500v16H.5z" fill="#fbe094" stroke="#ecc865" />
    <path d="M10.500 9.500h3v7h-3z" fill="#f6d87c" stroke="#e3bb55" />
  </svg>
);
const Ic = ({ k }: { k: string }) => (
  <svg width="17" height="17" viewBox="0 0 17 17" className="shrink-0 overflow-visible">
    {(k === "cloud" || k === "cc" || k === "one") && (
      <>
        <path d="M2.500.500h11v16h-11z" fill="#fbe094" stroke="#ecc865" />
        <path d="M12 9.500h3v7h-3z" fill="#f6d87c" stroke="#e3bb55" />
      </>
    )}
    {k === "cloud" && <path d="M2.500 15.500c-2.500-.5-1.500-3.500.5-3.500 1-3 4.500-2 5 0 2.500 0 2.500 3.500.5 3.500z" fill="#fff" stroke="#2c5f9e" strokeWidth="1.100" />}
    {k === "cc" && (
      <>
        <path d="M8 16c-3-1-3-6 1-6 3-3 8 0 7 3 0 3-3 4-8 3z" fill="#d9331c" />
        <path d="M8 14c-1-2 1-3 3-1s3 1 3 0-2-2-3-1" fill="none" stroke="#fff" />
      </>
    )}
    {k === "drop" && (
      <>
        <path d="M1 3l4-2 3.500 2L5 5.500zM9 3l4-2 4 2-4 2.500zM1 8l4-2.500L8.500 8 5 10zM9 8l4-2.500L17 8l-4 2zM9 11l4 2-4 2z" fill="#1271e0" />
        <circle cx="4.500" cy="12" r="4" fill="#3d9a50" stroke="#fff" strokeWidth=".6" />
        <path d="M2.500 12l1.500 1.500L6.500 11" fill="none" stroke="#fff" />
      </>
    )}
    {k === "pc" && (
      <>
        <path d="M.5 2h16v10H.5z" fill="#4fb0ee" stroke="#2f78b4" />
        <path d="M1 2.500h9l-6 9H1z" fill="#8fd0f8" opacity=".6" />
        <path d="M3 13.500h11M1 15.500h15" stroke="#7fa8cc" />
      </>
    )}
    {k === "3d" && (
      <>
        <path d="M8.500 1l7.500 2v10l-7.500 4-7.500-3V4z" fill="#2bbcd0" />
        <path d="M1 4l8 2v11l-8-3z" fill="#8fe3ea" />
        <path d="M8.500 1L16 3 9 6 1 4z" fill="#c8f2f4" />
      </>
    )}
    {k === "desk" && <path d="M.5 3h16v11H.5z" fill="#1c9bf6" stroke="#1463a5" />}
    {k === "doc" && (
      <>
        <path d="M2.500.500h9l3 3v13h-12z" fill="#fff" stroke="#8a959e" />
        <path d="M5 4h3M5 7h7M5 9.500h3M9 9.500h3M5 12h7M5 14h7M10 4h2" stroke="#4c92c4" />
      </>
    )}
    {k === "down" && <path d="M5.500 1h6v7h5l-8 8.500L.5 8h5z" fill="#3d8ed0" />}
    {k === "music" && (
      <>
        <ellipse cx="6" cy="14" rx="3.500" ry="2.700" fill="#1286dc" />
        <path d="M8.500 14V0c1 4 6 4 4.500 10 0-3-2-3.500-3-4" fill="#1286dc" stroke="#1286dc" strokeWidth="1.500" />
      </>
    )}
    {k === "pic" && (
      <>
        <path d="M.5 3h16v11.500H.5z" fill="#fff" stroke="#8794a0" />
        <path d="M2.500 5h12v7.500h-12z" fill="#a8d4f2" />
        <path d="M2.500 8c4 0 8 1 12 3v1.500h-12z" fill="#366a94" />
      </>
    )}
    {k === "vid" && (
      <>
        <path d="M1.500.500h14v16h-14z" fill="#33373d" />
        <path d="M4.500 1.500h8v6.500h-8zM4.500 9.500h8V16h-8z" fill="#4a62a8" />
        <path d="M5 6l4-3 3 3zM5 14l5-3 2 3z" fill="#b8a840" />
        <path d="M3 1v15M14 1v15" stroke="#e8e8e8" strokeDasharray="1.500 1.500" />
      </>
    )}
    {k === "os" && (
      <>
        <path d="M0 2h2.500v2.500H0zM3.500 2H6v2.500H3.500zM0 5.500h2.500V8H0zM3.500 5.500H6V8H3.500z" fill="#27b0e0" />
        <path d="M4 9l8-1 3 4v3H2v-3z" fill="#c4c8cc" />
        <path d="M2 12h13.500v3.500H2z" fill="#4b5156" />
        <path d="M11.500 14h2" stroke="#5de08a" />
      </>
    )}
    {k === "net" && (
      <>
        <path d="M2 3.500l10-1 3 3V8H1V6z" fill="#d4d4d4" />
        <path d="M1 7h14v3H1zM7 10h3v3H7zM3 13h8v2.500H3z" fill="#7f8386" />
        <path d="M9 8l7 8M16 8l-7 8" stroke="#d01818" strokeWidth="2.600" />
      </>
    )}
    {k === "network" && (
      <>
        <circle cx="11" cy="6.500" r="6" fill="#5f9cc0" />
        <path d="M8 3l4-1 2 3-3 2z" fill="#a8d4e8" />
        <path d="M.5 6h11v8H.5z" fill="#54b4ee" stroke="#2a78b4" />
        <path d="M3 16h8" stroke="#7fa8cc" />
      </>
    )}
  </svg>
);
const NAV: [string, string, boolean][] = [
  ["My Collaborations", "cloud", true],
  ["My Desktop", "cloud", true],
  ["My Documents", "cloud", true],
  ["My Media", "cloud", true],
  ["REU 2021", "cloud", true],
  ["Share", "cloud", true],
  ["Creative Cloud Files", "cc", false],
  ["Dropbox", "drop", false],
  ["OneDrive", "one", false],
  ["This PC", "pc", false],
  ["3D Objects", "3d", true],
  ["Desktop", "desk", true],
  ["Documents", "doc", true],
  ["Downloads", "down", true],
  ["Music", "music", true],
  ["Pictures", "pic", true],
  ["Videos", "vid", true],
  ["OS (C:)", "os", true],
  ["dmae_students (\\\\tree.cct.lsu.edu) (Z:)", "net", true],
  ["Network", "network", false],
];
const Chev = ({ cls = "" }: { cls?: string }) => (
  <svg width="5" height="8" viewBox="0 0 5 8" className={"shrink-0 " + cls}>
    <path d="M1 1l3 3-3 3" fill="none" stroke="#666" strokeWidth="1.400" />
  </svg>
);
const FILES = [
  ["shot0010", "5/21/2021 9:37 PM", "File folder"],
  ["mocap_patio_walk.FBX", "5/21/2021 8:23 PM", "3D Object"],
  ["PatioSceneHDR.HDR", "5/21/2021 11:04 PM", "HDR File"],
];

const Explorer = () => (
  <div className="absolute left-[616px] top-[253px] flex h-[646px] w-[1006px] flex-col overflow-hidden bg-white pl-px font-['Noto_Sans',sans-serif] text-[12px] tracking-[-.33px] text-[#1a1a1a] shadow-[0_0_14px_rgba(0,0,0,.45)]">
    <div className="flex h-[31px] items-center pl-[10px]">
      <WFolder />
      <div className="ml-[6px] h-[12px] w-px bg-[#888]" />
      <svg width="13" height="16" viewBox="0 0 13 16" className="ml-[11px]">
        <path d="M.5.500h9l3 3v12H.5z" fill="#fff" stroke="#8a8a8a" />
        <path d="M3 9l2.500 3L10 6" fill="none" stroke="#d84a3a" strokeWidth="1.600" />
      </svg>
      <WFolder cls="ml-[9px]" />
      <svg width="7" height="7" viewBox="0 0 7 7" className="ml-[8px] mt-1">
        <path d="M0 .7h7" stroke="#222" strokeWidth="1.300" />
        <path d="M.5 3h6l-3 3.500z" fill="#222" />
      </svg>
      <div className="ml-[8px] h-[12px] w-px bg-[#888]" />
      <span className="ml-[7px] pt-px">Virtual Production Class</span>
    </div>
    <div className="flex h-[24px] border-b border-[#dadcdf] text-[#444]">
      <div className="w-[56px] bg-[#0a63b3] text-center leading-[24px] text-white">File</div>
      <div className="w-[58px] text-center leading-[25px]">Home</div>
      <div className="w-[59px] text-center leading-[25px]">Share</div>
      <div className="w-[54px] text-center leading-[25px]">View</div>
    </div>
    <div className="mt-[5px] flex h-[30px] shrink-0 items-center">
      <svg width="93" height="14" viewBox="0 0 93 14" className="ml-[12px] shrink-0">
        <path d="M13 7H2M7 2L2 7l5 5" fill="none" stroke="#555" strokeWidth="1.500" />
        <path d="M31 7h11M37 2l5 5-5 5" fill="none" stroke="#c4c4c4" strokeWidth="1.400" />
        <path d="M58 5l3 3 3-3" fill="none" stroke="#666" strokeWidth="1.500" />
        <path d="M81 14V2M76 7l5-5 5 5" fill="none" stroke="#555" strokeWidth="1.600" />
      </svg>
      <div className="ml-px flex h-[30px] w-[384px] shrink-0 items-center border border-[#d4d4d4] pl-[4px]">
        <WFolder />
        <Chev cls="ml-[7px]" />
        <span className="ml-[9px] w-[40px] whitespace-nowrap">This PC</span>
        <Chev cls="ml-[8px]" />
        <span className="ml-[8px] w-[44px] whitespace-nowrap">Desktop</span>
        <Chev cls="ml-[8px]" />
        <span className="ml-[9px] w-[126px] whitespace-nowrap">Virtual Production Class</span>
        <Chev cls="ml-[9px]" />
        <svg width="11" height="7" viewBox="0 0 11 7" className="ml-auto mr-[9px]">
          <path d="M1.500 1l4 4 4-4" fill="none" stroke="#555" strokeWidth="1.700" />
        </svg>
      </div>
      <div className="flex h-[30px] w-[30px] shrink-0 items-center justify-center border border-l-0 border-[#d4d4d4]">
        <svg width="12" height="13" viewBox="0 0 12 13">
          <path d="M2.500 4A4.500 4.500 0 1 0 8 3" fill="none" stroke="#666" strokeWidth="1.700" />
          <path d="M1 1h5v5z" fill="#666" />
        </svg>
      </div>
      <div className="ml-[12px] flex h-[30px] flex-1 items-center border border-r-0 border-[#d4d4d4] pl-[14px] text-[#6f6f6f]">
        <svg width="13" height="13" viewBox="0 0 13 13">
          <circle cx="8" cy="5" r="4" fill="none" stroke="#777" />
          <path d="M5 8l-5 5" stroke="#777" strokeWidth="1.200" />
        </svg>
        <span className="ml-[13px] tracking-[-.35px]">Search Virtual Production Class</span>
      </div>
    </div>
    <div className="flex min-h-0 flex-1">
      <div className="flex w-[435px] shrink-0 flex-col">
        <div className="h-[7px]" />
        {NAV.map(([t, k, ind], i) => (
          <div key={t} className={"flex h-[24px] shrink-0 items-center whitespace-nowrap " + (ind ? "pl-[32px]" : "pl-[24px]") + (i >= 6 && !ind ? " mt-[8px]" : "") + (t === "Desktop" ? " mr-px bg-[#d9d9d9]" : "")}>
            <Ic k={k} />
            <span className="ml-[4px]">{t}</span>
          </div>
        ))}
        <div className="mt-[5px] pl-[14px] leading-[24px] text-[#2b3a5e]">3 items</div>
      </div>
      <div className="mt-[7px] flex h-[525px] w-[15px] shrink-0 flex-col items-center bg-[#f0f0f0]">
        <svg width="9" height="6" viewBox="0 0 9 6" className="mt-[6px]">
          <path d="M1 5l3.500-3.500L8 5" fill="none" stroke="#555" strokeWidth="1.700" />
        </svg>
        <div className="mt-[177px] h-[314px] w-full bg-[#cdcdcd]" />
        <svg width="9" height="6" viewBox="0 0 9 6" className="mt-[11px]">
          <path d="M1 1l3.500 3.500L8 1" fill="none" stroke="#555" strokeWidth="1.700" />
        </svg>
      </div>
      <div className="flex-1 pl-[22px]">
        <div className="relative mt-[7px] flex h-[26px] items-center text-[#4c607a]">
          <span className="w-[288px]">Name</span>
          <span className="h-full w-[162px] border-l border-[#dfe3e8] pl-[6px] leading-[26px]">Date modified</span>
          <span className="h-full border-l border-[#dfe3e8] pl-[6px] leading-[26px]">Type</span>
          <svg width="9" height="5" viewBox="0 0 9 5" className="absolute left-[137px] top-0">
            <path d="M.5 4.500l4-4 4 4" fill="none" stroke="#777" />
          </svg>
        </div>
        <div className="h-[5px]" />
        {FILES.map(([n, d, ty], i) => (
          <div key={n} className="flex h-[21px] items-center text-[#6a6a6a]">
            <div className="ml-[3px] w-[18px]">
              {i === 0 ? (
                <WFolder />
              ) : (
                <svg width="12" height="16" viewBox="0 0 12 16">
                  <path d="M.5.500h8l3 3v12H.5z" fill="#f8f8f8" stroke="#999" />
                  {i === 1 ? <circle cx="6" cy="9" r="3.500" fill="none" stroke="#444" /> : <path d="M1.500 9l4-4v2l3-1 1 3-1 3-2 1v-2l-2 1z" fill="#3c3c3c" />}
                </svg>
              )}
            </div>
            <span className="w-[274px] tracking-[-.35px] text-[#161616]">{n}</span>
            <span className="w-[162px] tracking-[-.48px]">{d}</span>
            <span>{ty}</span>
          </div>
        ))}
      </div>
    </div>
  </div>
);

const Taskbar = () => (
  <div className="flex h-[12px] items-start overflow-hidden bg-[linear-gradient(90deg,#1c1c1c,#222_45%,#484848_52%,#333_60%,#444348_66%,#48474c)]">
    <div className="ml-[48px] h-full w-[344px] shrink-0 bg-[#f2f2f2]" />
    <div className="ml-[99px] flex h-full w-[48px] shrink-0 justify-center bg-[#484848] pt-[10px]">
      <div className="mr-[10px] h-[4px] w-[12px] bg-[#e0a83a]" />
    </div>
    <svg width="560" height="12" viewBox="539 0 560 12" className="shrink-0">
      <path d="M563 12l7-5 7 5z" fill="#2a8ad8" />
      <path d="M607 14V9h11v5" fill="none" stroke="#eee" strokeWidth="2" />
      <circle cx="662" cy="18" r="10" fill="#e0502a" />
      <circle cx="711" cy="18" r="10" fill="#c8504a" />
      <circle cx="809" cy="18" r="9" fill="none" stroke="#ddd" strokeWidth="1.500" />
      <circle cx="862" cy="14" r="5" fill="#cfe8bf" stroke="#6aa84a" strokeWidth="1.500" />
      <path d="M912 12l3-2 3 2z" fill="#5aa0e0" />
      <circle cx="956" cy="18" r="9" fill="none" stroke="#ccc" strokeWidth="1.200" />
      <circle cx="1005" cy="18" r="10" fill="#1a2c58" />
      <circle cx="1053" cy="18" r="10" fill="#1a2c58" />
    </svg>
  </div>
);

export default function App() {
  return (
    <div className="relative flex h-[1052px] w-[1622px] flex-col overflow-hidden bg-[#232323] font-[Roboto,sans-serif]">
      <div className="flex h-[28px] shrink-0 bg-[repeating-linear-gradient(135deg,#1c1c1c_0_14px,#222222_16px_28px,#1c1c1c_30px)]">
        <svg width="36" height="27" viewBox="0 0 36 27">
          <path d="M1 12c1-5 5-8 10-8-2 1-3 2-3 4v8c0 2 1 3 2 3 2 0 3-1 3-3V9c0-1-1-2-2-2 3-1 5-2 7-3-1 1-1 2-1 4v9c0 1 1 2 2 1l1-1c2-1 3-1 3-1-2 3-4 5-7 6l-2-2-3 2c-4 0-7-2-7-6v-5c0-1 0-2-1-2s-2 2-2 3z" fill="#f2f2f2" />
        </svg>
        <div className="relative h-[27px] w-[209px]">
          <svg width="209" height="27" viewBox="0 0 209 27" className="absolute left-0 top-0">
            <path d="M0 27c4 0 5-3 7-8l4-13c1-4 3-5 6-5h174c3 0 5 1 6 5l5 13c2 5 3 8 7 8z" fill="#7d7d7d" />
          </svg>
          <span className="relative block pl-[24px] text-[12px] leading-[26px] tracking-[.15px] text-[#e4e4e4] [text-shadow:1px_1px_1px_#222]">Main*</span>
        </div>
      </div>
      <div className="flex h-[19px] shrink-0 items-center border-b border-black bg-[linear-gradient(#111,#232323)] text-[12.500px] tracking-[-.1px] text-[#d8d8d8]">
        <span className="ml-[10px] w-[39px]">File</span>
        <span className="w-[41px]">Edit</span>
        <span className="w-[63px]">Window</span>
        <span>Help</span>
      </div>
      <div className="flex h-[651px] shrink-0">
        <PlaceActors />
        <div className="ml-[5px] flex w-[1142px] shrink-0 flex-col">
          <Toolbar />
          <Viewport />
        </div>
        <Outliner />
      </div>
      <div className="mt-[6px] flex h-[336px] shrink-0">
        <ContentBrowser />
        <Sequencer />
        <Details />
      </div>
      <Taskbar />
      <Explorer />
      <div className="absolute left-[1080px] top-[412px] h-[42px] w-[167px] rounded-full border-[6px] border-[#00ff00]" />
      <div className="absolute left-[-8px] top-[725px] h-[43px] w-[170px] rounded-[22px] border-[7px] border-[#00ff00]" />
      <div className="absolute left-[15px] top-[966px] h-[52px] w-[169px] rounded-[26px] border-[6px] border-[#00ff00]" />
      <svg width="13" height="20" viewBox="0 0 13 20" className="absolute left-[1191px] top-[505px]">
        <path d="M.7 1v15l3.500-3.300L6.800 18l2.400-1.200-2.500-5H11.500z" fill="#fff" stroke="#222" />
      </svg>
    </div>
  );
}
